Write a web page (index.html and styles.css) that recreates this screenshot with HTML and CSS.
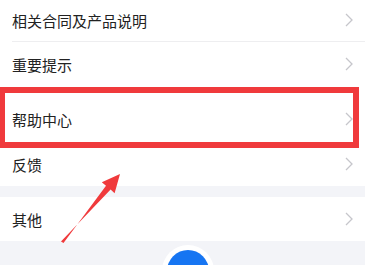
FILE: index.html
```html
<!DOCTYPE html>
<html lang="zh-CN">
<head>
    <meta charset="UTF-8">
    <meta name="viewport" content="width=device-width, initial-scale=1.0">
    <title>设置</title>
    <link rel="stylesheet" href="styles.css">
</head>
<body>
    <div class="page">
        <div class="group">
            <div class="row line">
                <span>相关合同及产品说明</span>
                <svg class="chev" viewBox="0 0 8 14"><polyline points="1,1 7,7 1,13"/></svg>
            </div>
            <div class="row">
                <span>重要提示</span>
                <svg class="chev" viewBox="0 0 8 14"><polyline points="1,1 7,7 1,13"/></svg>
            </div>
            <div class="row tall">
                <span>帮助中心</span>
                <svg class="chev" viewBox="0 0 8 14"><polyline points="1,1 7,7 1,13"/></svg>
                <div class="mark"></div>
            </div>
            <div class="row">
                <span>反馈</span>
                <svg class="chev" viewBox="0 0 8 14"><polyline points="1,1 7,7 1,13"/></svg>
            </div>
        </div>
        <div class="group last">
            <div class="row">
                <span>其他</span>
                <svg class="chev" viewBox="0 0 8 14"><polyline points="1,1 7,7 1,13"/></svg>
            </div>
        </div>
        <div class="footer">
            <div class="bump"><div class="fab"></div></div>
        </div>

        <svg class="arrow" viewBox="0 0 365 265">
            <polygon points="61,241.5 110.6,189.6 114.6,193.2 120,174 101.8,182.2 106,185.8 63.5,243"/>
        </svg>
    </div>
</body>
</html>
```

FILE: styles.css
```css
* {
    margin: 0;
    padding: 0;
    box-sizing: border-box;
}
body {
    font-family: "Noto Sans CJK SC", "Noto Sans", sans-serif;
    background-color: #f3f4f8;
    color: #222;
    overflow: hidden;
}
.page {
    position: relative;
    margin-top: -2px;
    height: 267px;
    overflow: hidden;
}
.group {
    background: #fff;
    margin-bottom: 11px;
}
.group.last {
    margin-bottom: 0;
}
.row {
    position: relative;
    display: flex;
    align-items: center;
    justify-content: space-between;
    height: 44px;
    padding: 0 12px;
    font-size: 15px;
}
.row.line::after {
    content: "";
    position: absolute;
    left: 12px;
    right: 0;
    bottom: 0;
    height: 1px;
    background: #eeeef0;
}
.row.tall {
    height: 56px;
    padding-top: 11px;
    padding-bottom: 1px;
}
.chev {
    width: 8px;
    height: 14px;
    fill: none;
    stroke: #c6c6cb;
    stroke-width: 1.3;
}
.mark {
    position: absolute;
    top: 1px;
    left: -1px;
    right: 6px;
    bottom: -6px;
    border: 6px solid #f03a3c;
}
.footer {
    display: flex;
    justify-content: center;
    padding-top: 4px;
    padding-left: 11px;
}
.bump {
    flex-shrink: 0;
    width: 52px;
    height: 52px;
    padding: 5px;
    border-radius: 50%;
    background: #fff;
}
.fab {
    width: 42px;
    height: 42px;
    border-radius: 50%;
    background: #1675f2;
}
.arrow {
    position: absolute;
    top: 2px;
    left: 0;
    width: 365px;
    height: 265px;
    fill: #f03a3c;
}
```
